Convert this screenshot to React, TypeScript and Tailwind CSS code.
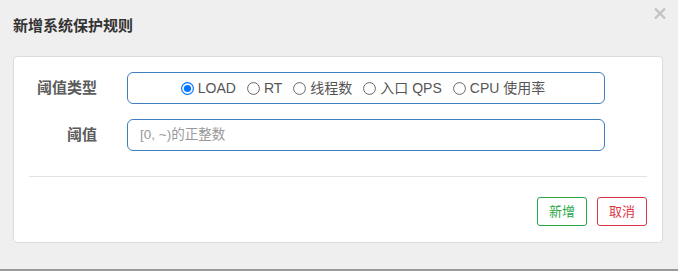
import React from "react";

function Radio({ checked, label }: { checked?: boolean; label: string }) {
  return (
    <label className="flex items-center gap-[4px]">
      <svg width="13" height="13" viewBox="0 0 13 13">
        {checked ? (
          <>
            <circle cx="6.5" cy="6.5" r="5.9" fill="#fff" stroke="#0075ff" strokeWidth="1.2" />
            <circle cx="6.5" cy="6.5" r="3.6" fill="#0075ff" />
          </>
        ) : (
          <circle cx="6.5" cy="6.5" r="5.9" fill="#fff" stroke="#666" strokeWidth="1" />
        )}
      </svg>
      <span>{label}</span>
    </label>
  );
}

export default function App() {
  return (
    <div
      className="w-[678px] h-[271px] bg-[#efefef] border-b-2 border-[#9a9a9a] relative overflow-hidden"
      style={{ fontFamily: '"Liberation Sans", "Noto Sans CJK SC", sans-serif' }}
    >
      <div className="h-[56px] flex items-center pl-[13px] pb-[6px]">
        <span className="text-[15px] font-bold text-[#333] leading-none">新增系统保护规则</span>
      </div>
      <svg className="absolute left-[654px] top-[8px]" width="12" height="11" viewBox="0 0 12 11">
        <path d="M1 0.5 L11 10.5 M11 0.5 L1 10.5" stroke="#c4c4c4" strokeWidth="2.4" />
      </svg>
      <div className="ml-[13px] w-[650px] h-[187px] bg-white border border-[#dcdcdc] rounded-[4px] pt-[15px] px-[15px]">
        <div className="flex flex-col gap-[15px]">
          <div className="flex items-center">
            <div className="w-[68px] text-right text-[15px] font-bold text-[#5c5c5c]">阈值类型</div>
            <div className="ml-[30px] w-[478px] h-[32px] border border-[#3d7fc1] rounded-[6px] flex items-center justify-center gap-[11px] text-[14px] text-[#555] pr-[6px]">
              <Radio checked label="LOAD" />
              <Radio label="RT" />
              <Radio label="线程数" />
              <Radio label="入口 QPS" />
              <Radio label="CPU 使用率" />
            </div>
          </div>
          <div className="flex items-center">
            <div className="w-[68px] text-right text-[15px] font-bold text-[#5c5c5c]">阈值</div>
            <div className="ml-[30px] w-[478px] h-[32px] border border-[#3d7fc1] rounded-[6px] flex items-center pl-[12px] text-[13.5px] text-[#999]">
              [0, ~)的正整数
            </div>
          </div>
        </div>
        <div className="mt-[25px] h-px bg-[#e3e3e3]" />
        <div className="mt-[20px] flex justify-end gap-[10px]">
          <button className="w-[50px] h-[29px] border border-[#28a745] rounded-[3px] text-[13px] text-[#28a745] bg-white">新增</button>
          <button className="w-[50px] h-[29px] border border-[#dc3545] rounded-[3px] text-[13px] text-[#dc3545] bg-white">取消</button>
        </div>
      </div>
    </div>
  );
}
